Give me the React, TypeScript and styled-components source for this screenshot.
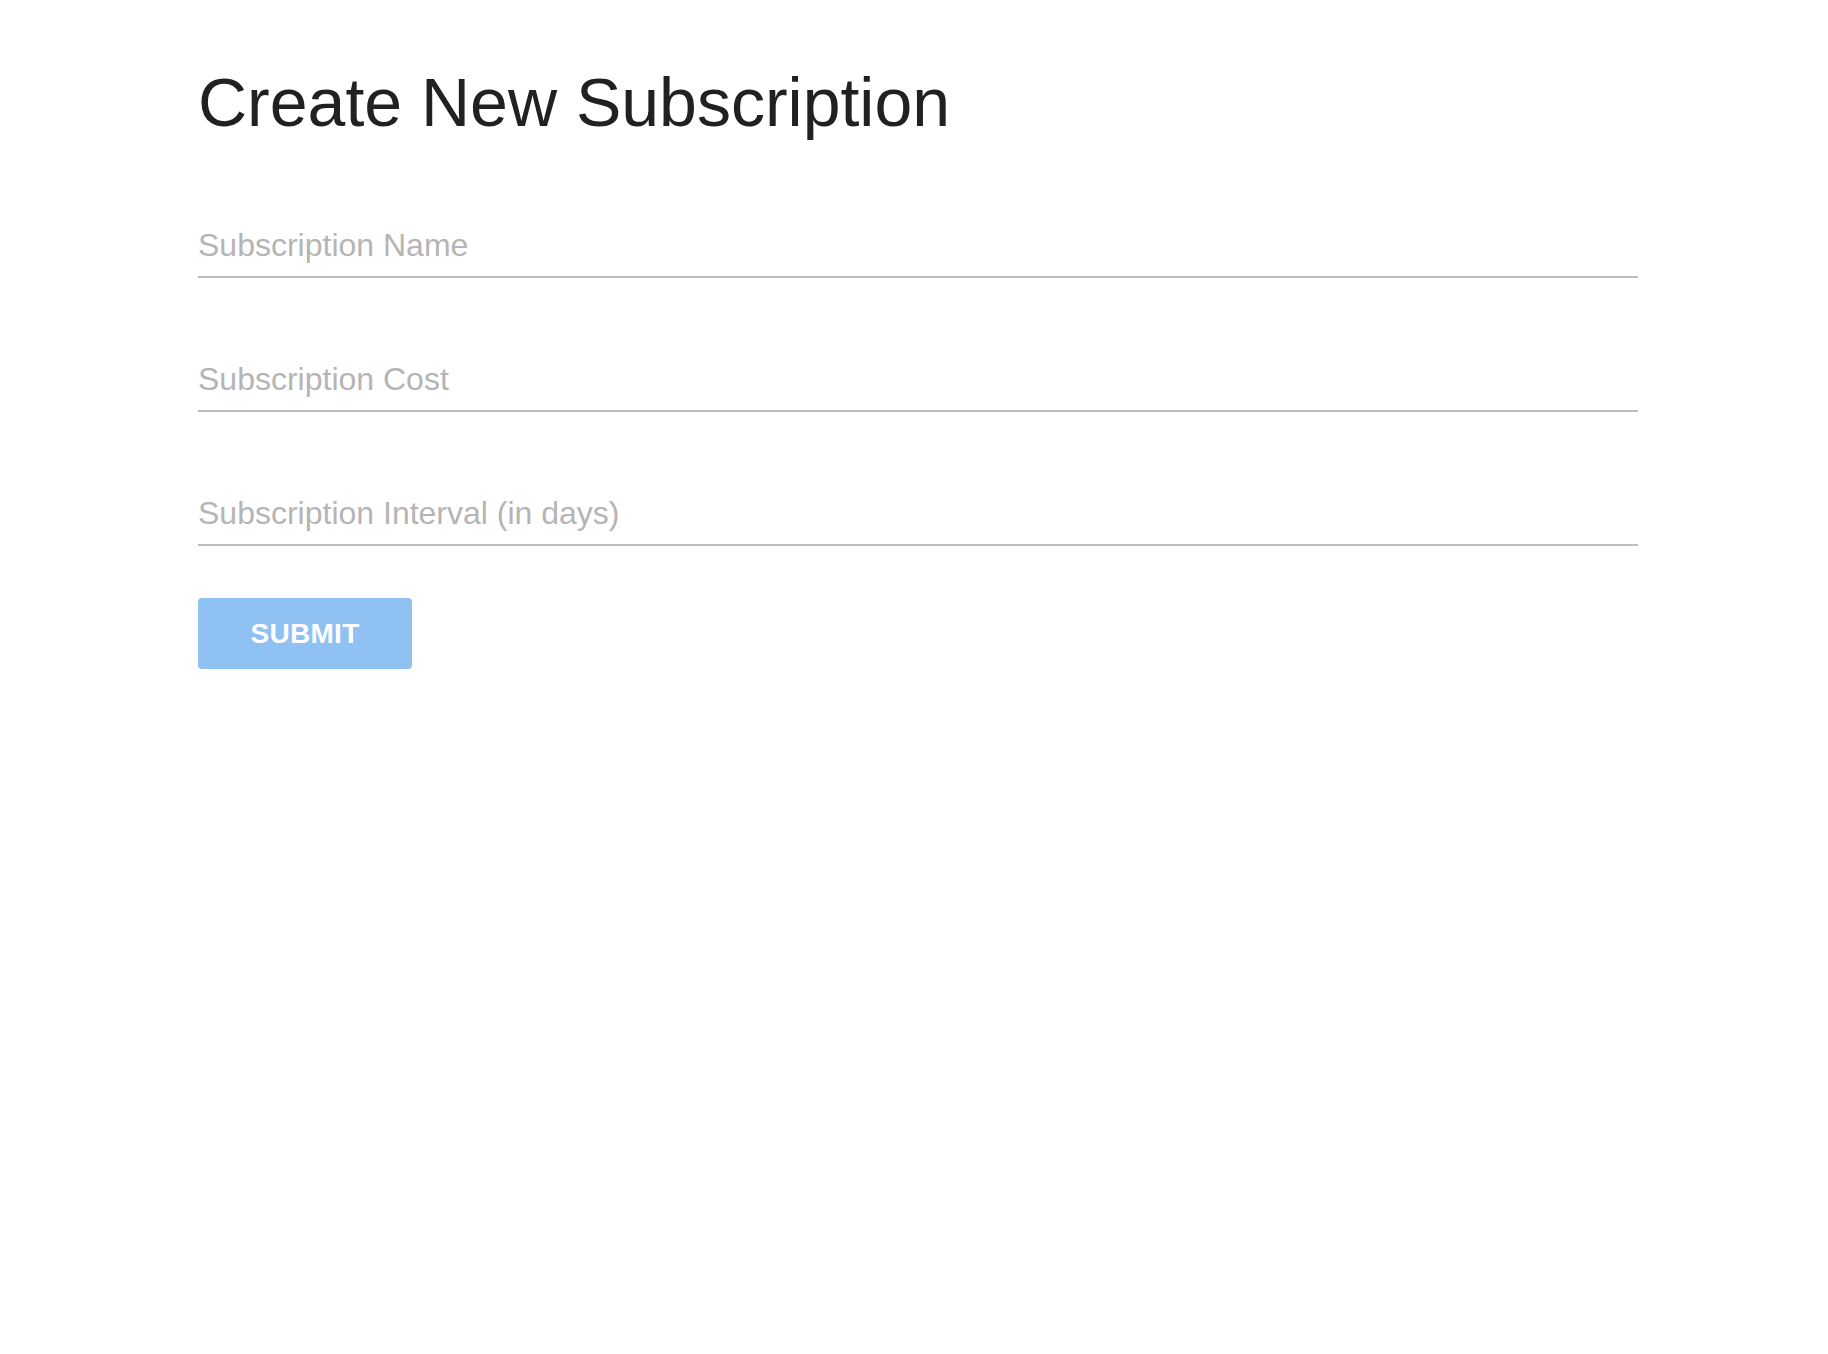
import React from 'react';
import styled, { createGlobalStyle } from 'styled-components';

const GlobalStyle = createGlobalStyle`
  html, body {
    margin: 0;
    padding: 0;
    background: #ffffff;
    font-family: 'Liberation Sans', Arial, Helvetica, sans-serif;
  }
`;

const Page = styled.div`
  padding: 62px 0 0 198px;
  width: 1440px;
`;

const Title = styled.h1`
  margin: 0;
  font-size: 68px;
  line-height: 80px;
  font-weight: 400;
  color: #212121;
`;

const Form = styled.form`
  display: flex;
  flex-direction: column;
  align-items: flex-start;
  margin-top: 83px;
`;

const Field = styled.input`
  box-sizing: content-box;
  width: 100%;
  height: 40px;
  margin: 0 0 81px;
  padding: 0 0 11px;
  border: none;
  border-bottom: 2px solid #bdbdbd;
  outline: none;
  background: transparent;
  font-family: inherit;
  font-size: 32px;
  line-height: 40px;
  color: #212121;

  &::placeholder {
    color: #b5b5b5;
    opacity: 1;
  }

  &:last-of-type {
    margin-bottom: 52px;
  }
`;

const SubmitButton = styled.button`
  width: 214px;
  height: 71px;
  border: none;
  border-radius: 4px;
  background: #90c1f3;
  color: #ffffff;
  font-family: inherit;
  font-size: 28px;
  font-weight: 700;
  letter-spacing: 0.3px;
  cursor: pointer;
`;

const fields = ['Subscription Name', 'Subscription Cost', 'Subscription Interval (in days)'];

const App = () => (
  <>
    <GlobalStyle />
    <Page>
      <Title>Create New Subscription</Title>
      <Form onSubmit={(e) => e.preventDefault()}>
        {fields.map((label) => (
          <Field key={label} type="text" placeholder={label} />
        ))}
        <SubmitButton type="submit">SUBMIT</SubmitButton>
      </Form>
    </Page>
  </>
);

export default App;
